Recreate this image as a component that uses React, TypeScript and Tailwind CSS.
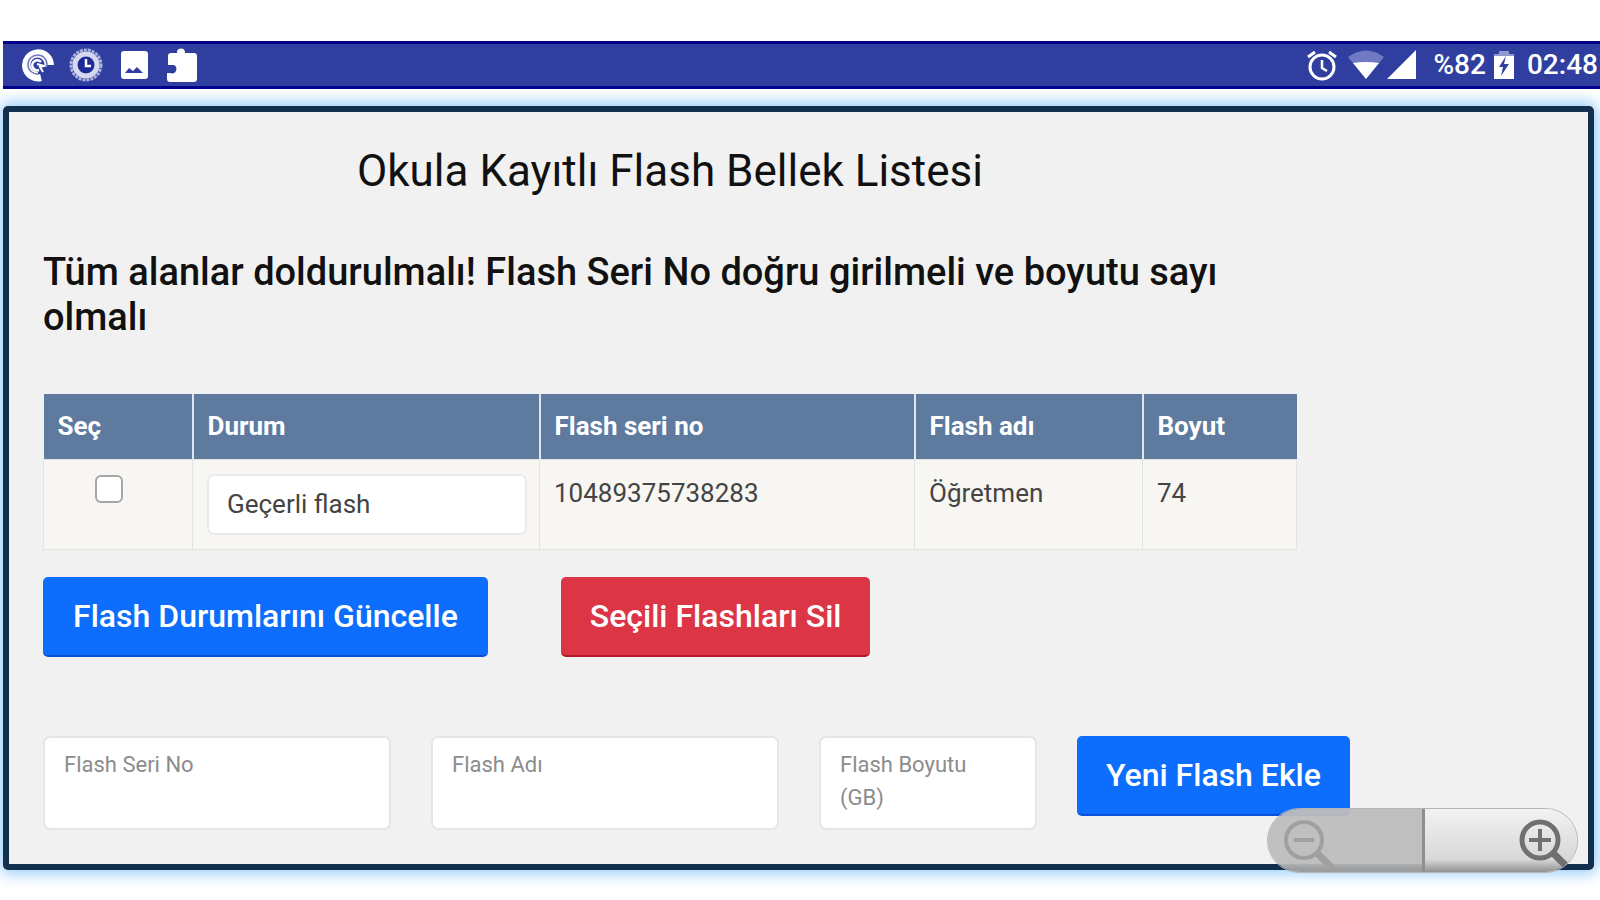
import * as React from "react";

type FlashRow = {
  id: number;
  status: string;
  serial: string;
  name: string;
  size: string;
};

const rows: FlashRow[] = [
  { id: 1, status: "Geçerli flash", serial: "10489375738283", name: "Öğretmen", size: "74" },
];

const statuses = ["Geçerli flash", "Geçersiz flash"];

function StatusBar() {
  return (
    <header className="flex h-[48px] items-center justify-between border-y-3 border-[#00008b] bg-[#303f9f] pl-[18px] text-white">
      <div className="flex items-center gap-[14px]">
        <svg className="size-[34px]" viewBox="0 0 34 34" fill="none">
          <path d="M29.500 17A12.500 12.500 0 1 0 20 29.500" stroke="currentColor" strokeWidth="7" />
          <path d="M25 17A8.500 8.500 0 1 0 17 25" stroke="currentColor" strokeWidth="3" />
          <path d="M26 17A9.500 9.500 0 1 0 17 26" stroke="#6f7ac2" strokeWidth="1.500" />
          <path d="M20 14a5 5 0 1 0-2 8" stroke="currentColor" strokeWidth="2.500" />
          <path d="M16 16l7 2-4 1 3 5" stroke="currentColor" strokeWidth="2" />
        </svg>
        <svg className="size-[34px]" viewBox="0 0 34 34" fill="none">
          <circle cx="17" cy="17" r="15" stroke="#aab1dd" strokeWidth="3" strokeDasharray="3 1" />
          <circle cx="17" cy="17" r="11" stroke="#d5d8ee" strokeWidth="5" />
          <circle cx="17" cy="17" r="8" fill="#1e2b96" />
          <path d="M17 11v7h5" stroke="currentColor" strokeWidth="2.500" />
        </svg>
        <svg className="size-[34px]" viewBox="0 0 34 34">
          <rect x="4" y="3" width="27" height="28" rx="3" fill="currentColor" />
          <path d="M8 25l4-5 4 3 4-4 6 6z" fill="#303f9f" />
        </svg>
        <svg className="size-[34px]" viewBox="0 0 34 34" fill="currentColor">
          <path d="M3 8q0-3 3-3h6a4 4 0 0 1 8-1v1h9q3 0 3 3v23q0 3-3 3H5q-3 0-3-3v-6h3a4 4 0 0 0 4-8H3z" />
        </svg>
      </div>
      <div className="flex items-center pr-[2px] text-[28px] leading-[32px] font-medium">
        <svg className="size-[32px]" viewBox="0 0 32 32" fill="none" stroke="currentColor">
          <circle cx="16" cy="18" r="12" strokeWidth="3" />
          <path d="M2 8l7-5M30 8l-7-5" strokeWidth="3" />
          <path d="M16 11v8l5 3" strokeWidth="2.500" />
        </svg>
        <svg className="ml-[10px] h-[30px] w-[36px]" viewBox="0 0 36 30">
          <path d="M0 7Q18-6 36 7L18 29z" fill="#6f7ac2" />
          <path d="M5 13Q18 11 31 13L18 29z" fill="currentColor" />
        </svg>
        <svg className="ml-[3px] size-[30px]" viewBox="0 0 30 30" fill="currentColor">
          <path d="M29 0v29H0z" />
        </svg>
        <span className="ml-[17px]">%82</span>
        <svg className="ml-[8px] h-[30px] w-[20px]" viewBox="0 0 20 30">
          <path d="M5 4V1h10v3h5v6H0V4z" fill="#8f98cf" />
          <path d="M0 6h20v23H0z" fill="currentColor" />
          <path d="M12 6L5 17h4l-2 9 8-12h-5z" fill="#303f9f" />
        </svg>
        <span className="ml-[13px]">02:48</span>
      </div>
    </header>
  );
}

function ZoomControls() {
  return (
    <div className="absolute right-[10px] -bottom-[9px] flex h-[65px] w-[311px] overflow-hidden rounded-full border border-[#b4b4b4]">
      <button
        type="button"
        aria-label="Uzaklaştır"
        disabled
        className="flex w-[157px] items-center border-r-3 border-[#8f8f8f] bg-linear-to-b from-[#bdbdbd]/95 from-85% to-[#969696]/95 pl-[14px] text-[#a0a0a0]"
      >
        <svg className="mt-[8px] h-[54px] w-[56px]" viewBox="0 0 56 54" fill="none" stroke="currentColor">
          <circle cx="22" cy="23" r="18" strokeWidth="4" />
          <path d="M12 23h20" strokeWidth="4" />
          <path d="M35 36l16 16" strokeWidth="7" />
        </svg>
      </button>
      <button
        type="button"
        aria-label="Yakınlaştır"
        className="flex flex-1 items-center justify-end bg-linear-to-b from-[#f2f2f2] via-[#d8d8d8] via-80% to-[#929292] pr-[2px] text-[#707070]"
      >
        <svg className="mt-[8px] h-[54px] w-[56px]" viewBox="0 0 56 54" fill="none" stroke="currentColor">
          <circle cx="21" cy="23" r="18" strokeWidth="5" />
          <path d="M10 23h22M21 12v22" strokeWidth="4" />
          <path d="M34 36l16 16" strokeWidth="7" />
        </svg>
      </button>
    </div>
  );
}

export default function App() {
  const [selected, setSelected] = React.useState<Record<number, boolean>>({});

  const toggle = (id: number) => setSelected((prev) => ({ ...prev, [id]: !prev[id] }));

  return (
    <div className="bg-white pt-[41px] pb-[30px] pl-[3px] font-[Roboto,sans-serif] text-[#111]">
      <StatusBar />
      <main className="relative mt-[17px] mr-[6px] rounded-[5px] border-6 border-[#12304d] bg-[#f1f1f1] px-[34px] pt-[34px] pb-[34px] shadow-[0_0_16px_3px_#8ec8fa]">
        <div className="max-w-[1254px]">
          <h1 className="text-center text-[44px] leading-[50px]">Okula Kayıtlı Flash Bellek Listesi</h1>
          <p className="mt-[54px] text-[38px] leading-[45px] font-medium">
            Tüm alanlar doldurulmalı! Flash Seri No doğru girilmeli ve boyutu sayı olmalı
          </p>

          <table className="mt-[54px] w-full table-fixed border-collapse text-left text-[26px] leading-[39px]">
            <thead>
              <tr className="h-[65px] bg-[#5e7a9f] text-white">
                <th className="w-[149px] border-r-2 border-[#dfe5ec] px-[14px]">Seç</th>
                <th className="w-[347px] border-r-2 border-[#dfe5ec] px-[14px]">Durum</th>
                <th className="w-[375px] border-r-2 border-[#dfe5ec] px-[14px]">Flash seri no</th>
                <th className="w-[228px] border-r-2 border-[#dfe5ec] px-[14px]">Flash adı</th>
                <th className="px-[14px]">Boyut</th>
              </tr>
            </thead>
            <tbody>
              {rows.map((row) => (
                <tr key={row.id} className="bg-[#f7f6f2] align-top text-[#444]">
                  <td className="border border-[#e3e3e3] px-[14px] pt-[15px]">
                    <input
                      type="checkbox"
                      aria-label={`${row.name} seç`}
                      checked={Boolean(selected[row.id])}
                      onChange={() => toggle(row.id)}
                      className="ml-[37px] block size-[28px] appearance-none rounded-[6px] border-2 border-[#a6a6a6] bg-white checked:bg-[#0d6efd]"
                    />
                  </td>
                  <td className="border border-[#e3e3e3] py-[14px] pr-[12px] pl-[14px]">
                    <select
                      aria-label="Durum"
                      defaultValue={row.status}
                      className="block h-[61px] w-full appearance-none rounded-[7px] border-2 border-[#ebebeb] bg-white px-[18px]"
                    >
                      {statuses.map((status) => (
                        <option key={status}>{status}</option>
                      ))}
                    </select>
                  </td>
                  <td className="border border-[#e3e3e3] px-[14px] py-[14px]">{row.serial}</td>
                  <td className="border border-[#e3e3e3] px-[14px] py-[14px]">{row.name}</td>
                  <td className="border border-[#e3e3e3] px-[14px] py-[14px]">{row.size}</td>
                </tr>
              ))}
            </tbody>
          </table>

          <div className="mt-[27px] flex flex-wrap gap-[73px] text-[32px] font-medium text-white">
            <button type="button" className="h-[80px] rounded-[5px] border-b-2 border-[#0a52d8] bg-[#0d6efd] px-[30px]">
              Flash Durumlarını Güncelle
            </button>
            <button type="button" className="h-[80px] rounded-[5px] border-b-2 border-[#b5172a] bg-[#dc3545] px-[29px]">
              Seçili Flashları Sil
            </button>
          </div>
        </div>

        <form className="mt-[79px] flex flex-wrap items-start gap-[40px]" onSubmit={(e) => e.preventDefault()}>
          <textarea
            aria-label="Flash Seri No"
            placeholder="Flash Seri No"
            className="h-[94px] w-[348px] resize-none overflow-hidden rounded-[7px] border-2 border-[#e6e6e6] bg-white px-[19px] py-[10px] text-[22px] leading-[33px] placeholder:text-[#8c8c8c]"
          />
          <textarea
            aria-label="Flash Adı"
            placeholder="Flash Adı"
            className="h-[94px] w-[348px] resize-none overflow-hidden rounded-[7px] border-2 border-[#e6e6e6] bg-white px-[19px] py-[10px] text-[22px] leading-[33px] placeholder:text-[#8c8c8c]"
          />
          <textarea
            aria-label="Flash Boyutu (GB)"
            placeholder="Flash Boyutu (GB)"
            className="h-[94px] w-[218px] resize-none overflow-hidden rounded-[7px] border-2 border-[#e6e6e6] bg-white py-[10px] pr-[40px] pl-[19px] text-[22px] leading-[33px] placeholder:text-[#8c8c8c]"
          />
          <button
            type="submit"
            className="h-[80px] rounded-[5px] border-b-2 border-[#0a52d8] bg-[#0d6efd] px-[29px] text-[32px] font-medium text-white"
          >
            Yeni Flash Ekle
          </button>
        </form>

        <ZoomControls />
      </main>
    </div>
  );
}
